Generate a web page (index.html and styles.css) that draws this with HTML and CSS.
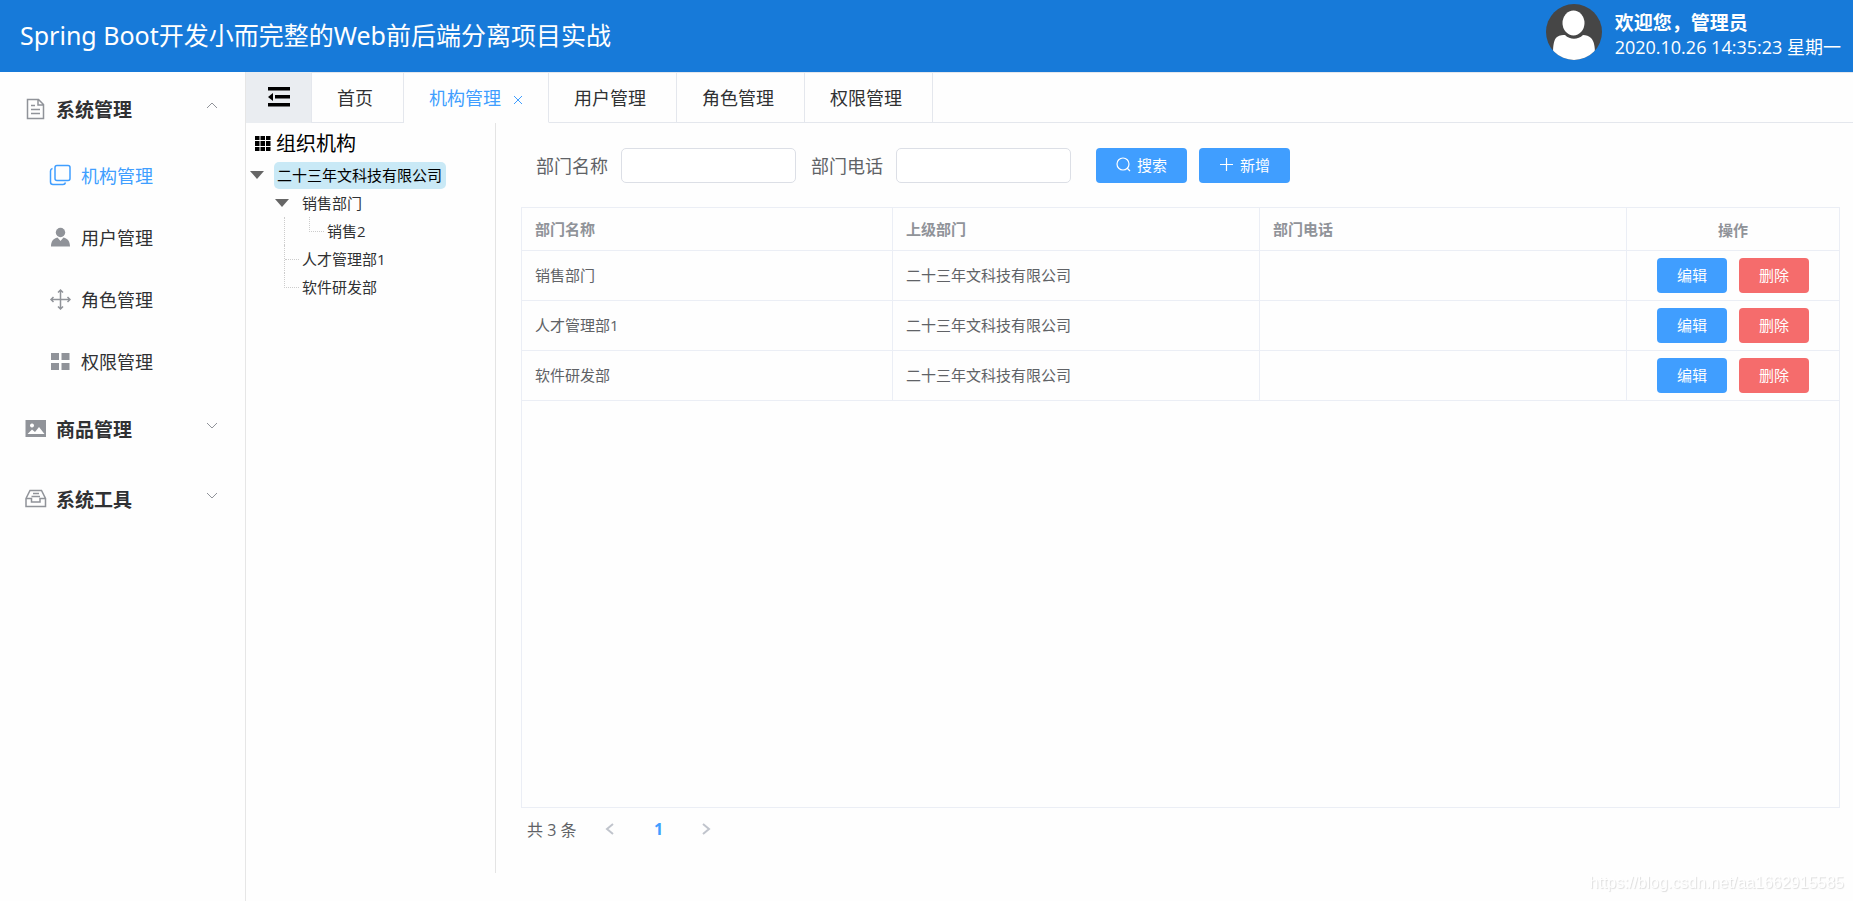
FILE: index.html
```
<!DOCTYPE html>
<html lang="zh-CN">
<head>
<meta charset="utf-8">
<title>机构管理</title>
<link rel="stylesheet" href="styles.css">
</head>
<body>
<header class="topbar">
  <h1 class="topbar-title">Spring Boot开发小而完整的Web前后端分离项目实战</h1>
  <div class="user">
    <svg class="avatar" viewBox="0 0 56 56" aria-hidden="true">
      <clipPath id="disc"><circle cx="28" cy="28" r="28"/></clipPath>
      <circle cx="28" cy="28" r="28" fill="#464646"/>
      <g clip-path="url(#disc)" fill="#fff">
        <ellipse cx="27.500" cy="19" rx="11" ry="12.500"/>
        <path d="M7 50c0-9 1-15 4-17 3-2 6-2 8-2 5 5 13 5 18 0 3 0 6 1 8 3 3 3 4 8 4 16v8H7z"/>
      </g>
    </svg>
    <div class="user-text">
      <strong class="user-name">欢迎您，管理员</strong>
      <span class="user-date">2020.10.26 14:35:23 星期一</span>
    </div>
  </div>
</header>
<div class="shell">
  <nav class="sidebar">
    <button class="group" type="button">
      <svg class="icon" viewBox="0 0 22 22"><path d="M2.500 1.500h11l5 5v14h-16zM13 2v5h5M6 7.500h4M6 11.500h9M6 15.500h9"/></svg>
      <span class="group-name">系统管理</span>
      <svg class="caret" viewBox="0 0 12 12"><path d="M1 9l5-5 5 5"/></svg>
    </button>
    <ul class="submenu">
      <li><a class="item item-active" href="#">
        <svg class="icon" viewBox="0 0 22 22"><rect x="6" y="1.500" width="15" height="15" rx="2"/><path d="M3.500 4.500Q1.500 5 1.500 7v11q0 2.500 2.500 2.500h10q2 0 2.500-2"/></svg>
        机构管理</a></li>
      <li><a class="item" href="#">
        <svg class="icon icon-solid" viewBox="0 0 22 22"><circle cx="11.500" cy="6.500" r="4.700"/><path d="M2 20.500c0-5 2-8 6.500-9l3 3.500 3-3.500c4.500 1 6.500 4 6.500 9z"/></svg>
        用户管理</a></li>
      <li><a class="item" href="#">
        <svg class="icon" viewBox="0 0 22 22"><path d="M11.500 2v19M2 11.500h19M9 4.500L11.500 2 14 4.500M9 18.500l2.500 2.500 2.500-2.500M4.500 9L2 11.500 4.500 14M18.500 9l2.500 2.500-2.500 2.500"/></svg>
        角色管理</a></li>
      <li><a class="item" href="#">
        <svg class="icon icon-solid" viewBox="0 0 22 22"><path d="M2 3h8v7H2zM12.500 3H20.500v7h-8zM2 13h8v7H2zM12.500 13h8v7h-8z"/></svg>
        权限管理</a></li>
    </ul>
    <button class="group" type="button">
      <svg class="icon icon-solid" viewBox="0 0 22 22"><path fill-rule="evenodd" d="M.5 2h20.500v17H.500zM2.500 16h17l-5.500-7-4 5-3-2.500zM7 5.500a2 2 0 1 0 .01 0z"/></svg>
      <span class="group-name">商品管理</span>
      <svg class="caret" viewBox="0 0 12 12"><path d="M1 4l5 5 5-5"/></svg>
    </button>
    <button class="group" type="button">
      <svg class="icon" viewBox="0 0 22 22"><path d="M1 10.500L5 2.500h11.500l4 8V18.500H1zM1 10.500h5.500v3.500h8.500v-3.500h5.500M8 5.500h6M6.500 8.500h8.500"/></svg>
      <span class="group-name">系统工具</span>
      <svg class="caret" viewBox="0 0 12 12"><path d="M1 4l5 5 5-5"/></svg>
    </button>
  </nav>
  <main class="main">
    <div class="tabs">
      <button class="collapse" type="button" aria-label="收起菜单">
        <svg class="collapse-icon" viewBox="0 0 24 20"><path d="M1 0h22v3.500H1zM8 8h15v3.500H8zM1 16h22v3.500H1zM6 6v8L1 10z"/></svg>
      </button>
      <div class="tab-list">
        <button class="tab" type="button">首页</button>
        <button class="tab tab-active" type="button">机构管理<svg class="close" viewBox="0 0 10 10"><path d="M1 1l8 8M9 1L1 9"/></svg></button>
        <button class="tab" type="button">用户管理</button>
        <button class="tab" type="button">角色管理</button>
        <button class="tab" type="button">权限管理</button>
      </div>
    </div>
    <div class="content">
      <aside class="tree-panel">
        <h2 class="tree-title"><svg class="grid-icon" viewBox="0 0 16 16"><path d="M0 0h4.500v4H0zM5.500 0h4.500v4H5.500zM11 0h4.500v4H11zM0 5h4.500v5H0zM5.500 5h4.500v5H5.500zM11 5h4.500v5H11zM0 11h4.500v4H0zM5.500 11h4.500v4H5.500zM11 11h4.500v4H11z"/></svg>组织机构</h2>
        <ul class="tree">
          <li>
            <div class="node"><span class="slot"><i class="arrow"></i></span><span class="label label-active">二十三年文科技有限公司</span></div>
            <ul class="branch">
              <li>
                <div class="node"><span class="slot"><i class="arrow"></i></span><span class="label">销售部门</span></div>
                <ul class="branch branch-line">
                  <li class="node"><span class="slot slot-end"></span><span class="label">销售2</span></li>
                </ul>
              </li>
              <li class="node"><span class="slot slot-mid"></span><span class="label">人才管理部1</span></li>
              <li class="node"><span class="slot slot-end"></span><span class="label">软件研发部</span></li>
            </ul>
          </li>
        </ul>
      </aside>
      <section class="panel">
        <form class="search">
          <label class="field-label" for="dept-name">部门名称</label>
          <input class="field" id="dept-name" type="text">
          <label class="field-label" for="dept-phone">部门电话</label>
          <input class="field" id="dept-phone" type="text">
          <div class="search-actions">
            <button class="btn btn-tool" type="button"><svg class="btn-icon" viewBox="0 0 15 15"><circle cx="7" cy="7" r="6"/><path d="M11 11l3 3"/></svg>搜索</button>
            <button class="btn btn-tool" type="button"><svg class="btn-icon" viewBox="0 0 15 15"><path d="M7.500 1v13M1 7.500h13"/></svg>新增</button>
          </div>
        </form>
        <div class="table-box">
          <table class="table">
            <colgroup><col class="col-name"><col><col><col class="col-ops"></colgroup>
            <thead><tr><th>部门名称</th><th>上级部门</th><th>部门电话</th><th class="ops">操作</th></tr></thead>
            <tbody>
              <tr><td>销售部门</td><td>二十三年文科技有限公司</td><td></td><td class="ops"><div class="row-actions"><button class="btn" type="button">编辑</button><button class="btn btn-danger" type="button">删除</button></div></td></tr>
              <tr><td>人才管理部1</td><td>二十三年文科技有限公司</td><td></td><td class="ops"><div class="row-actions"><button class="btn" type="button">编辑</button><button class="btn btn-danger" type="button">删除</button></div></td></tr>
              <tr><td>软件研发部</td><td>二十三年文科技有限公司</td><td></td><td class="ops"><div class="row-actions"><button class="btn" type="button">编辑</button><button class="btn btn-danger" type="button">删除</button></div></td></tr>
            </tbody>
          </table>
        </div>
        <div class="pager">
          <span class="total">共 3 条</span>
          <button class="page" type="button" aria-label="上一页"><svg class="page-icon" viewBox="0 0 12 12"><path d="M9 1L3 6l6 5"/></svg></button>
          <button class="page page-current" type="button">1</button>
          <button class="page" type="button" aria-label="下一页"><svg class="page-icon" viewBox="0 0 12 12"><path d="M3 1l6 5-6 5"/></svg></button>
        </div>
      </section>
    </div>
  </main>
</div>
<div class="watermark">https://blog.csdn.net/aa1662915585</div>
</body>
</html>
```
FILE: styles.css
```
* { box-sizing: border-box; }

body {
  margin: 0;
  min-height: 100vh;
  display: flex;
  flex-direction: column;
  background: #fefefe;
  color: #303133;
  font-family: "Open Sans", "Noto Sans CJK SC", sans-serif;
  font-size: 15px;
}

button, input { font: inherit; }
button { border: 0; padding: 0; background: none; color: inherit; cursor: pointer; }
ul { list-style: none; margin: 0; padding: 0; }
svg { flex: none; }

.topbar {
  display: flex;
  align-items: center;
  justify-content: space-between;
  height: 72px;
  padding: 0 12px 0 20px;
  background: #177ad9;
  color: #fff;
}
.topbar-title {
  margin: 0;
  padding-bottom: 2px;
  font-family: "Noto Sans", "Noto Sans CJK SC", sans-serif;
  font-size: 25px;
  font-weight: 400;
  line-height: 36px;
}
.user { display: flex; align-items: center; gap: 13px; padding-bottom: 8px; }
.avatar { width: 56px; height: 56px; }
.user-text { display: flex; flex-direction: column; padding-top: 6px; }
.user-name { font-size: 19px; line-height: 24px; }
.user-date { font-size: 18px; line-height: 24px; }

.shell { flex: 1; display: flex; }

.sidebar { width: 246px; flex: none; padding-top: 2px; border-right: 1px solid #e6e6e6; }
.group {
  display: flex;
  align-items: center;
  gap: 9px;
  width: 100%;
  height: 70px;
  padding: 0 27px 0 25px;
  font-size: 19px;
  font-weight: 700;
  text-align: left;
}
.group-name { flex: 1; }
.icon { width: 22px; height: 22px; fill: none; stroke: #909399; stroke-width: 1.5; }
.icon-solid { fill: #909399; stroke: none; }
.caret { width: 12px; height: 12px; margin-bottom: 8px; fill: none; stroke: #909399; }
.submenu { padding-bottom: 2px; }
.item {
  display: flex;
  align-items: center;
  gap: 10px;
  height: 62px;
  padding: 0 0 1px 49px;
  color: #303133;
  font-size: 18px;
  text-decoration: none;
}
.item-active { color: #409eff; }
.item-active .icon { stroke: #409eff; }

.main { flex: 1; min-width: 0; display: flex; flex-direction: column; }
.tabs { display: flex; height: 51px; }
.collapse {
  width: 65px;
  display: flex;
  align-items: center;
  justify-content: center;
  padding-bottom: 2px;
  background: #eaedf1;
}
.collapse-icon { width: 24px; height: 20px; }
.tab-list { flex: 1; display: flex; border-left: 1px solid #e4e7ed; border-top: 1px solid #e4e7ed; }
.tab-list::after { content: ""; flex: 1; border-bottom: 1px solid #e4e7ed; }
.tab {
  display: flex;
  align-items: center;
  padding: 0 30px 2px 25px;
  border-right: 1px solid #e4e7ed;
  border-bottom: 1px solid #e4e7ed;
  font-size: 18px;
}
.tab-active { gap: 12px; padding: 0 25px 2px; color: #409eff; border-bottom-color: transparent; }
.close { width: 10px; height: 10px; margin-top: 6px; fill: none; stroke: #409eff; }

.content { flex: 1; display: flex; padding-bottom: 28px; }
.tree-panel { width: 250px; flex: none; padding: 6px 4px; border-right: 1px solid #e4e4e4; }
.tree-title {
  display: flex;
  align-items: center;
  gap: 5px;
  margin: 0 0 2px;
  padding-left: 5px;
  color: #000;
  font-size: 20px;
  font-weight: 400;
  line-height: 30px;
}
.grid-icon { width: 16px; height: 16px; }
.tree { line-height: 27px; }
.node { display: flex; align-items: center; height: 28px; }
.slot { width: 24px; flex: none; }
.arrow {
  display: block;
  width: 14px;
  border: 7px solid transparent;
  border-top: 8px solid #666;
  border-bottom: 0;
}
.branch { padding-left: 25px; }
.branch-line { margin-left: 9px; padding-left: 15px; border-left: 1px dotted #ccc; }
.slot-mid, .slot-end { width: 15px; margin-left: 9px; border-left: 1px dotted #ccc; }
.slot-mid { height: 28px; display: flex; align-items: center; }
.slot-mid::after { content: ""; flex: 1; border-top: 1px dotted #ccc; }
.slot-end { height: 15px; align-self: flex-start; border-bottom: 1px dotted #ccc; }
.label { padding: 0 4px 0 3px; border-radius: 5px; white-space: nowrap; }
.label-active { background: #c9e9f6; color: #000; }

.panel { flex: 1; min-width: 0; display: flex; flex-direction: column; padding: 25px 13px 25px 25px; }
.search { display: flex; align-items: center; height: 35px; margin-bottom: 24px; padding-left: 15px; color: #606266; }
.field-label { margin-right: 13px; font-size: 18px; line-height: 34px; }
.field {
  width: 175px;
  height: 35px;
  margin-right: 15px;
  padding: 0 12px;
  border: 1px solid #dcdfe6;
  border-radius: 5px;
  background: #fff;
}
.search-actions { display: flex; gap: 12px; margin-left: 10px; }
.btn {
  display: flex;
  align-items: center;
  justify-content: center;
  gap: 6px;
  width: 70px;
  height: 35px;
  padding-bottom: 2px;
  border-radius: 4px;
  background: #409eff;
  color: #fff;
}
.btn-tool { width: 91px; }
.btn-danger { background: #f56c6c; }
.btn-icon { width: 15px; height: 15px; fill: none; stroke: #fff; stroke-width: 1.2; }

.table-box { flex: 1; border: 1px solid #ebeef5; }
.table { width: 100%; table-layout: fixed; border-collapse: separate; border-spacing: 0; color: #606266; }
.col-name { width: 371px; }
.col-ops { width: 212px; }
.table th, .table td {
  height: 50px;
  padding: 0 12px 2px 13px;
  border-right: 1px solid #ebeef5;
  border-bottom: 1px solid #ebeef5;
  text-align: left;
}
.table th { height: 43px; color: #909399; font-weight: 700; }
.table .ops { padding: 0 12px; text-align: center; border-right: 0; }
.row-actions { display: flex; justify-content: center; gap: 12px; }

.pager { display: flex; align-items: center; height: 42px; margin-bottom: -2px; padding-left: 6px; color: #606266; font-size: 16px; }
.total { margin-right: 10px; }
.page { display: flex; align-items: center; justify-content: center; width: 48px; height: 35px; color: #c0c4cc; }
.page-current { color: #409eff; font-weight: 700; }
.page-icon { width: 12px; height: 12px; fill: none; stroke: #c0c4cc; stroke-width: 2; }

.watermark {
  position: fixed;
  right: 9px;
  bottom: 8px;
  color: #fff;
  font: 16px/20px "Liberation Sans", sans-serif;
  text-shadow: 1px 1px 1px #ddd;
}
```
